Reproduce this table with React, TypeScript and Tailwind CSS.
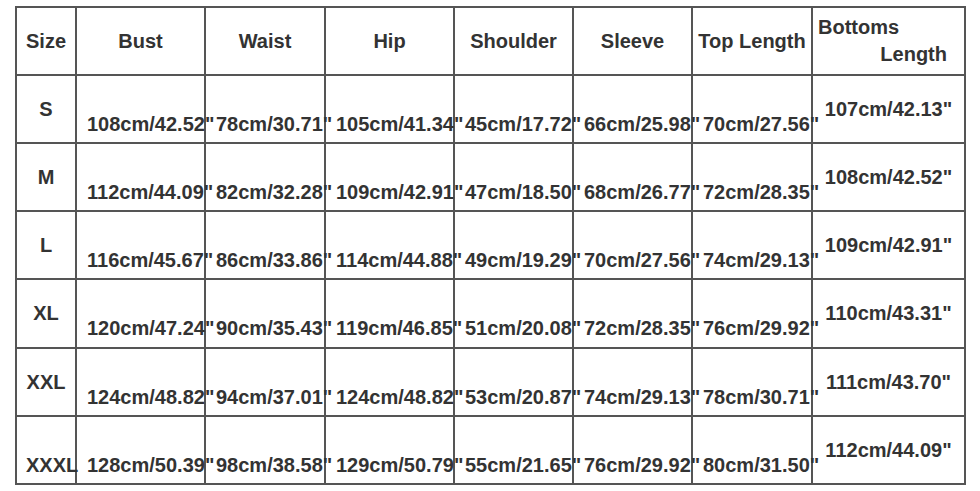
const headers = ["Bust", "Waist", "Hip", "Shoulder", "Sleeve", "Top Length"];

const rows = [
  { size: "S", values: ['108cm/42.52"', '78cm/30.71"', '105cm/41.34"', '45cm/17.72"', '66cm/25.98"', '70cm/27.56"'], bottoms: '107cm/42.13"' },
  { size: "M", values: ['112cm/44.09"', '82cm/32.28"', '109cm/42.91"', '47cm/18.50"', '68cm/26.77"', '72cm/28.35"'], bottoms: '108cm/42.52"' },
  { size: "L", values: ['116cm/45.67"', '86cm/33.86"', '114cm/44.88"', '49cm/19.29"', '70cm/27.56"', '74cm/29.13"'], bottoms: '109cm/42.91"' },
  { size: "XL", values: ['120cm/47.24"', '90cm/35.43"', '119cm/46.85"', '51cm/20.08"', '72cm/28.35"', '76cm/29.92"'], bottoms: '110cm/43.31"' },
  { size: "XXL", values: ['124cm/48.82"', '94cm/37.01"', '124cm/48.82"', '53cm/20.87"', '74cm/29.13"', '78cm/30.71"'], bottoms: '111cm/43.70"' },
  { size: "XXXL", values: ['128cm/50.39"', '98cm/38.58"', '129cm/50.79"', '55cm/21.65"', '76cm/29.92"', '80cm/31.50"'], bottoms: '112cm/44.09"' },
];

const cell = "border-r-2 border-b-2 border-[#555] min-w-0";

const App = () => {
  return (
    <div className="min-h-[491px] bg-white pl-[15px] pt-[6px] font-['Liberation_Sans',Arial,sans-serif] text-[20px] font-bold leading-[23px] text-[#333]">
      <div className="grid w-[951px] grid-cols-[60px_129px_120px_129px_119px_119px_120px_153px] grid-rows-[68px_68px_68px_68px_69px_68px_68px] border-t-2 border-l-2 border-[#555]">
        {/* header */}
        <div className={`${cell} flex items-center justify-center px-[9px] whitespace-nowrap`}>Size</div>
        {headers.map((h) => (
          <div key={h} className={`${cell} flex items-center justify-center whitespace-nowrap`}>
            {h}
          </div>
        ))}
        <div className={`${cell} flex flex-col pt-[6px] leading-[27px]`}>
          <span className="pl-[5px]">Bottoms</span>
          <span className="self-end pr-[17px]">Length</span>
        </div>

        {/* rows */}
        {rows.map((r, i) => (
          <div key={r.size} className="contents">
            <div
              className={`${cell} px-[9px] text-center whitespace-nowrap ${
                i === rows.length - 1 ? "pt-[37px]" : "flex items-center justify-center"
              }`}
            >
              {r.size}
            </div>
            {r.values.map((v, j) => (
              <div key={j} className={`${cell} pl-[10px] pt-[37px] whitespace-nowrap`}>
                {v}
              </div>
            ))}
            <div className={`${cell} flex items-center justify-center whitespace-nowrap`}>{r.bottoms}</div>
          </div>
        ))}
      </div>
    </div>
  );
};

export default App;
